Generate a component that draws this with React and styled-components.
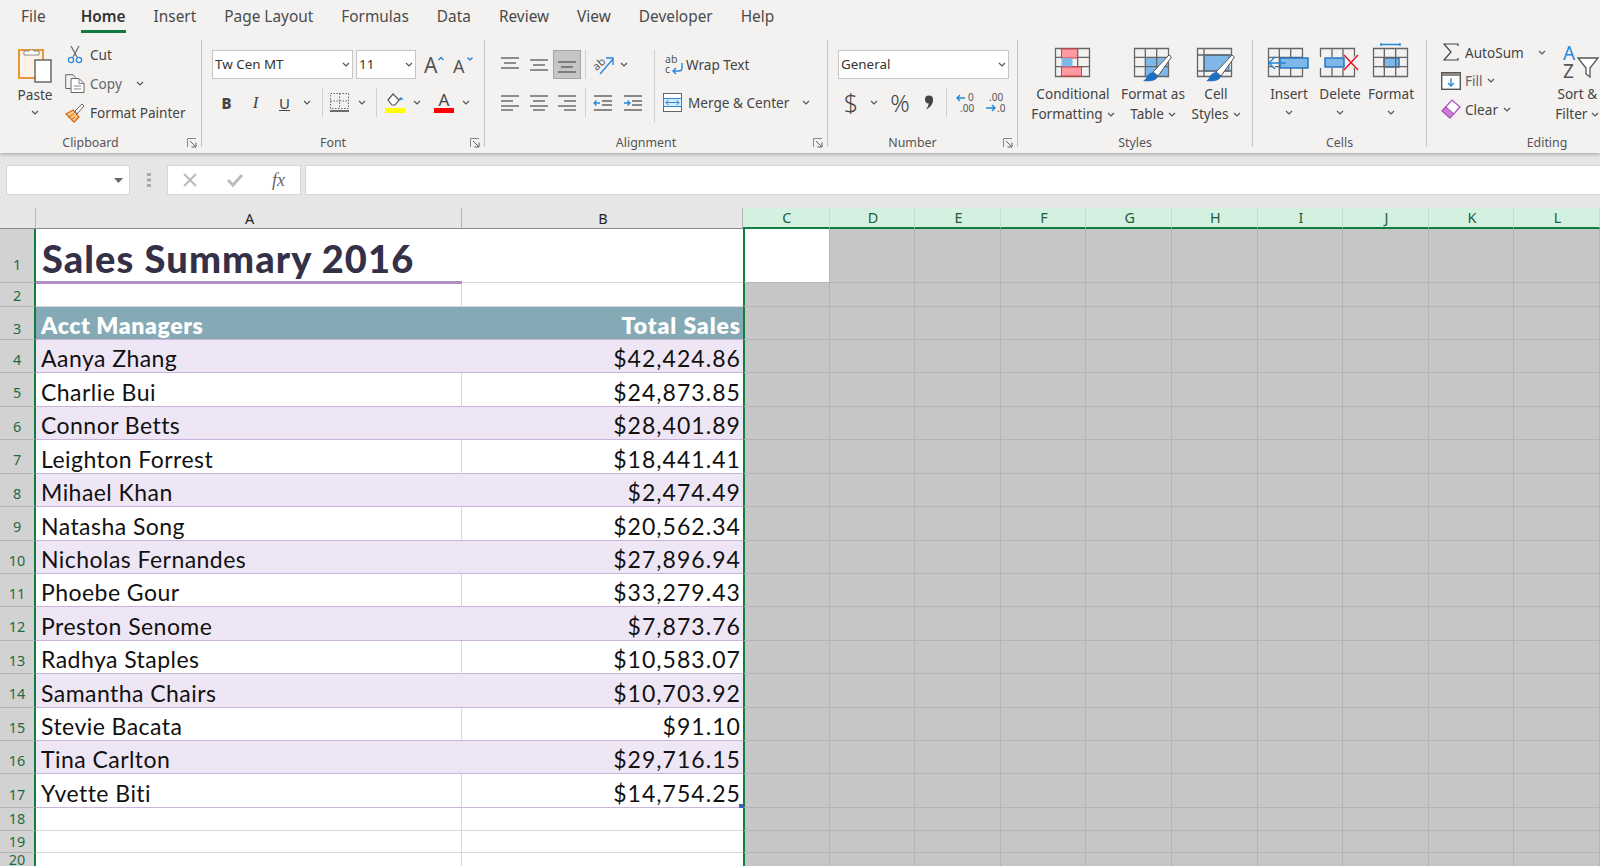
import React from 'react'
import styled, { createGlobalStyle } from 'styled-components'

const GlobalStyle = createGlobalStyle`
  html, body { margin: 0; padding: 0; height: 100%; overflow: hidden; background: #e6e6e6; }
  body { font-family: "Noto Sans", "Open Sans", sans-serif; color: #444; }
  svg { overflow: visible; flex: none; }
`

const Page = styled.div`
  width: 1600px;
  height: 866px;
  overflow: hidden;
  display: flex;
  flex-direction: column;
`

/* ---------- tabs ---------- */
const TabBar = styled.div`
  height: 40px;
  background: #f3f2f1;
  display: flex;
  padding-left: 21px;
  gap: 28px;
  box-sizing: border-box;
`
const Tab = styled.div`
  height: 33px;
  box-sizing: border-box;
  line-height: 33px;
  font-size: 15.4px;
  color: ${p => (p.$active ? '#333' : '#4a4a4a')};
  font-weight: ${p => (p.$active ? 600 : 400)};
  border-bottom: ${p => (p.$active ? '3px solid #107c41' : '0')};
  margin-left: ${p => (p.$active ? '7px' : '0')};
`

/* ---------- ribbon ---------- */
const Ribbon = styled.div`
  height: 113px;
  background: #f3f2f1;
  display: flex;
  align-items: flex-start;
  box-shadow: 0 2px 3px rgba(0, 0, 0, 0.22);
  position: relative;
  flex: none;
`
const Group = styled.div`
  width: ${p => p.$w}px;
  height: 107px;
  flex: none;
  box-sizing: border-box;
  display: flex;
  flex-direction: column;
  border-right: ${p => (p.$last ? '0' : '1.5px solid #c8c6c4')};
`
const GroupBody = styled.div`
  flex: 1;
  display: flex;
  padding: ${p => p.$pad || '10px 0 0 10px'};
  min-height: 0;
`
const Footer = styled.div`
  height: 12px;
  display: flex;
  align-items: flex-start;
  flex: none;
`
const FooterLabel = styled.div`
  flex: 1;
  text-align: center;
  font-size: 12.4px;
  line-height: 16px;
  color: #555;
`
const LauncherBox = styled.div`
  width: 20px;
  display: flex;
  justify-content: flex-end;
  padding: 3px 4px 0 0;
  box-sizing: border-box;
`
const Stack = styled.div`
  display: flex;
  flex-direction: column;
  gap: ${p => p.$gap ?? 9}px;
`
const Row = styled.div`
  display: flex;
  align-items: center;
  height: 29px;
  padding-left: ${p => p.$pl ?? 0}px;
`
const Tool = styled.div`
  width: ${p => p.$w}px;
  height: 29px;
  flex: none;
  display: flex;
  align-items: center;
  justify-content: center;
  box-sizing: border-box;
  background: ${p => (p.$on ? '#c6c6c6' : 'transparent')};
  border: ${p => (p.$on ? '1px solid #a5a5a5' : '0')};
`
const ToolSep = styled.div`
  width: 1px;
  height: ${p => p.$h ?? 29}px;
  flex: none;
  background: #d2d0ce;
  margin: 0 ${p => p.$mr ?? 7}px 0 ${p => p.$ml ?? 7}px;
`
const Select = styled.div`
  width: ${p => p.$w}px;
  height: 29px;
  box-sizing: border-box;
  flex: none;
  background: #fff;
  border: 1px solid #c8c6c4;
  display: flex;
  align-items: center;
  justify-content: space-between;
  padding: 0 2px 1px 2px;
  margin-right: ${p => p.$mr ?? 0}px;
  font-size: 13.4px;
  color: #333;
`
const Label = styled.span`
  font-size: 13.6px;
  color: ${p => p.$c || '#444'};
  white-space: nowrap;
  margin-left: ${p => p.$ml ?? 0}px;
  margin-right: ${p => p.$mr ?? 0}px;
`
const Letter = styled.span`
  font-family: ${p => (p.$i ? '"Liberation Serif", serif' : '"Noto Sans", sans-serif')};
  font-size: ${p => (p.$i ? 17 : 15)}px;
  font-weight: ${p => (p.$b ? 800 : 400)};
  font-style: ${p => (p.$i ? 'italic' : 'normal')};
  text-decoration: ${p => (p.$u ? 'underline' : 'none')};
  color: #444;
`
const BigSymbol = styled.span`
  font-size: ${p => p.$s}px;
  color: #444;
  font-weight: 300;
  line-height: 1;
`
const PasteButton = styled.div`
  width: 48px;
  margin-left: 11px;
  margin-right: 4px;
  display: flex;
  flex-direction: column;
  align-items: center;
  padding-top: 5px;
`
const PasteText = styled(Label)`
  margin-top: 2px;
`
const SmallAction = styled.div`
  display: flex;
  align-items: center;
  height: 29px;
`
const IconSlot = styled.div`
  width: 24px;
  display: flex;
  justify-content: center;
  flex: none;
`
const BigButton = styled.div`
  width: ${p => p.$w}px;
  flex: none;
  display: flex;
  flex-direction: column;
  align-items: center;
  font-size: 13.6px;
  line-height: 20px;
  color: #444;
  white-space: nowrap;
`
const SortButton = styled(BigButton)`
  margin-left: 9px;
`
const BigIcon = styled.div`
  height: 44px;
  box-sizing: border-box;
  padding-top: ${p => p.$top ?? 8}px;
  padding-left: ${p => p.$left ?? 0}px;
  display: flex;
  align-items: flex-start;
  justify-content: center;
`
const LineText = styled.div`
  display: flex;
  align-items: center;
  gap: 4px;
  height: 20px;
`
const ChevronRow = styled.div`
  height: ${p => p.$h ?? 16}px;
  display: flex;
  align-items: center;
`
const EditStack = styled.div`
  display: flex;
  flex-direction: column;
  margin-top: -2px;
`
const EditAction = styled.div`
  height: 28.5px;
  display: flex;
  align-items: center;
`
const EditSlot = styled.div`
  width: 24px;
  flex: none;
  display: flex;
  justify-content: center;
  margin-right: 2px;
`

/* ---------- formula bar ---------- */
const FormulaBar = styled.div`
  height: 55px;
  flex: none;
  background: #e6e6e6;
  box-sizing: border-box;
  padding: 12px 0 13px 6px;
  display: flex;
  align-items: stretch;
`
const NameBox = styled.div`
  width: 124px;
  box-sizing: border-box;
  background: #fff;
  border: 1px solid #d6d6d6;
  display: flex;
  align-items: center;
  justify-content: flex-end;
  padding-right: 6px;
`
const Grip = styled.div`
  width: 37px;
  display: flex;
  align-items: center;
  justify-content: center;
`
const FnBox = styled.div`
  width: 134px;
  box-sizing: border-box;
  background: #fff;
  border: 1px solid #d6d6d6;
  display: flex;
  align-items: center;
  padding-left: 14px;
  gap: 28px;
`
const Fx = styled.span`
  font-family: "Liberation Serif", serif;
  font-style: italic;
  font-size: 18px;
  color: #666;
`
const FormulaInput = styled.div`
  flex: 1;
  margin-left: 4px;
  background: #fff;
  border: 1px solid #d6d6d6;
  border-right: 0;
`

/* ---------- sheet ---------- */
const Sheet = styled.div`
  flex: 1;
  display: grid;
  grid-template-columns: 36px 426px 281px 86.6px repeat(9, 85.6px);
  grid-template-rows: 21px 54px 24px 33px repeat(14, 33.43px) 22.6px 22.6px 1fr;
  overflow: hidden;
`
const Corner = styled.div`
  background: #e6e6e6;
  border-right: 1px solid #bbb;
  border-bottom: 1px solid #8a8a8a;
  box-sizing: border-box;
`
const ColHead = styled.div`
  box-sizing: border-box;
  display: flex;
  align-items: center;
  justify-content: center;
  font-size: 14.4px;
  padding-left: 2px;
  background: ${p => (p.$sel ? '#d3f0e0' : '#e6e6e6')};
  color: ${p => (p.$sel ? '#1d5f3a' : '#222')};
  border-right: 1px solid ${p => (p.$sel ? '#c0e0cf' : '#b4b4b4')};
  border-bottom: ${p => (p.$sel ? '2px solid #107c41' : '1px solid #8a8a8a')};
`
const RowHead = styled.div`
  box-sizing: border-box;
  background: #d2d2d2;
  color: #1d6b3e;
  font-size: 14.4px;
  line-height: 1;
  display: flex;
  align-items: flex-end;
  justify-content: center;
  padding-bottom: ${p => p.$pb ?? 3}px;
  border-right: 2px solid #107c41;
  border-bottom: 1px solid #b4b4b4;
`
const Cell = styled.div`
  box-sizing: border-box;
  font-family: Lato, "Open Sans", sans-serif;
  font-size: 23px;
  line-height: 1;
  white-space: nowrap;
  display: flex;
  align-items: flex-end;
  padding: 0 2px ${p => (p.$head ? 2 : 2)}px 5px;
  justify-content: ${p => (p.$right ? 'flex-end' : 'flex-start')};
  color: ${p => (p.$head ? '#fff' : '#111')};
  font-weight: ${p => (p.$head ? 800 : 400)};
  letter-spacing: ${p => (p.$head ? (p.$right ? '0.9px' : '0.6px') : p.$right ? '1.05px' : '0.45px')};
  background: ${p => (p.$head ? '#85aab5' : p.$band ? '#efe6f5' : '#fff')};
  border-bottom: 1px solid #c9b5dc;
  border-right: ${p => (p.$head || p.$band || p.$right ? '0' : '1px solid #d8d8d8')};
  position: relative;
`
const TitleCell = styled.div`
  box-sizing: border-box;
  font-family: Lato, "Open Sans", sans-serif;
  font-size: 38px;
  font-weight: 900;
  letter-spacing: 1.1px;
  line-height: 1;
  color: #343048;
  background: #fff;
  display: flex;
  align-items: flex-end;
  padding: 0 0 4px 6px;
  margin-bottom: -1px;
  position: relative;
  white-space: nowrap;
  border-bottom: 3px solid #b08fc7;
`
const PlainCell = styled.div`
  box-sizing: border-box;
  background: #fff;
  border-bottom: 1px solid #d8d8d8;
  border-right: ${p => (p.$noRight ? '0' : '1px solid #d8d8d8')};
`
const GreyCell = styled.div`
  box-sizing: border-box;
  background: ${p => (p.$white ? '#fff' : '#c6c6c6')};
  border-right: 1px solid #b4b4b4;
  border-bottom: 1px solid #b4b4b4;
  border-left: ${p => (p.$first ? '2px solid #107c41' : '0')};
`
const FillHandle = styled.i`
  position: absolute;
  right: 0;
  bottom: -1px;
  width: 4px;
  height: 4px;
  background: #3c5fc0;
`

/* ---------- icons ---------- */
const Chevron = ({ ml = 0, mr = 0 }) => (
  <svg width="8" height="5" viewBox="0 0 8 5" style={{ marginLeft: ml, marginRight: mr }}>
    <path d="M1 1l3 3 3-3" fill="none" stroke="#555" strokeWidth="1.2" />
  </svg>
)
const Launcher = () => (
  <svg width="10" height="10" viewBox="0 0 10 10">
    <path d="M.5 9V.5H9" fill="none" stroke="#8a8886" />
    <path d="M3 3l5.5 5.5M9 4.5V9H4.5" fill="none" stroke="#605e5c" />
  </svg>
)
const PasteIcon = () => (
  <svg width="34" height="38" viewBox="0 0 34 38">
    <rect x="1" y="5" width="24" height="28" fill="#fbf1e4" stroke="#e8973a" strokeWidth="2" />
    <path d="M6 10V6h5a3 3 0 0 1 5 0h5v4z" fill="#fff" stroke="#8a8886" />
    <rect x="17" y="15" width="16" height="22" fill="#fff" stroke="#605e5c" strokeWidth="1.4" />
  </svg>
)
const CutIcon = () => (
  <svg width="16" height="19" viewBox="0 0 16 19">
    <path d="M4 1l6 11M12 1L6 12" fill="none" stroke="#666" strokeWidth="1.2" />
    <circle cx="4" cy="15" r="2.6" fill="none" stroke="#2b88d8" strokeWidth="1.3" />
    <circle cx="12" cy="15" r="2.6" fill="none" stroke="#2b88d8" strokeWidth="1.3" />
  </svg>
)
const CopyIcon = () => (
  <svg width="20" height="19" viewBox="0 0 20 19">
    <path d="M6 14.500H.7V.7h7.500l2.500 3" fill="none" stroke="#666" />
    <path d="M6 4.500h8l5 5v9H6z" fill="#fff" stroke="#666" />
    <path d="M14 4.500v5h5M9 12h7M9 15h7" fill="none" stroke="#888" />
  </svg>
)
const PainterIcon = () => (
  <svg width="20" height="20" viewBox="0 0 20 20">
    <path d="M1 11l7-4 6 7-5 5z" fill="#f6c48d" stroke="#d8690f" strokeWidth="1.3" />
    <path d="M3.500 14l5-3M6 17l4-3" stroke="#d8690f" />
    <path d="M10 8l7-7 2 2-7 8z" fill="#fff" stroke="#666" />
  </svg>
)
const FontSizeIcon = ({ up }) => (
  <svg width="21" height="20" viewBox="0 0 21 20">
    <text x="0" y="18" fontFamily="Noto Sans" fontSize={up ? 21 : 18} fill="#555">A</text>
    <path d={up ? 'M14.500 5l2.500-2.500L19.500 5' : 'M14.500 2.500L17 5l2.500-2.500'} fill="none" stroke="#2b88d8" strokeWidth="1.4" />
  </svg>
)
const BorderIcon = () => (
  <svg width="19" height="19" viewBox="0 0 19 19">
    <path d="M.5.5h18v15H.5zM9.500.5v15M.5 8h18" fill="none" stroke="#666" strokeDasharray="1.5 1.5" />
    <path d="M0 18h19" stroke="#333" strokeWidth="1.4" />
  </svg>
)
const FillIcon = () => (
  <svg width="20" height="21" viewBox="0 0 20 21">
    <path d="M3 8l5-6 6 6-4 5H7z" fill="#fff" stroke="#555" strokeWidth="1.2" />
    <path d="M14 7c2-3 4-1 4 1l-2-1-1 2z" fill="#1f6fc0" />
    <rect x="0" y="16" width="20" height="5" fill="#ffff00" />
  </svg>
)
const ColorIcon = () => (
  <svg width="20" height="21" viewBox="0 0 20 21">
    <text x="10" y="14" textAnchor="middle" fontFamily="Noto Sans" fontSize="17" fill="#444">A</text>
    <rect x="0" y="16" width="20" height="5" fill="#f00" />
  </svg>
)
const Lines = ({ rows, w = 18, h = 16 }) => (
  <svg width={w} height={h} viewBox={`0 0 ${w} ${h}`}>
    {rows.map(([a, b, y], i) => (
      <path key={i} d={`M${a} ${y}H${b}`} stroke="#555" strokeWidth="1.3" />
    ))}
  </svg>
)
const IndentIcon = ({ out }) => (
  <svg width="18" height="16" viewBox="0 0 18 16">
    <path d="M0 1h18M8 6h10M8 10h10M0 15h18" stroke="#666" strokeWidth="1.3" />
    <path d={out ? 'M6 8H0m2.500-2.500L0 8l2.500 2.500' : 'M0 8h6M3.500 5.500L6 8l-2.500 2.500'} fill="none" stroke="#1f8ad8" strokeWidth="1.3" />
  </svg>
)
const OrientIcon = () => (
  <svg width="22" height="20" viewBox="0 0 22 20">
    <text x="0" y="13" fontFamily="Noto Sans" fontSize="11" fill="#555" transform="rotate(-42 6 10)">ab</text>
    <path d="M7 19L20 4M13 3h7v7" fill="none" stroke="#2b88d8" strokeWidth="1.4" />
  </svg>
)
const WrapIcon = () => (
  <svg width="19" height="20" viewBox="0 0 19 20">
    <text x="0" y="8" fontFamily="Noto Sans" fontSize="10.5" fill="#555">ab</text>
    <text x="0" y="18" fontFamily="Noto Sans" fontSize="10.5" fill="#555">c</text>
    <path d="M17 8v5a3 3 0 0 1-3 3H8m3-3l-3 3 3 3" fill="none" stroke="#2b88d8" strokeWidth="1.4" />
  </svg>
)
const MergeIcon = () => (
  <svg width="19" height="19" viewBox="0 0 19 19">
    <rect x=".5" y=".5" width="18" height="18" fill="#fff" stroke="#666" />
    <rect x=".5" y="5.500" width="18" height="8" fill="#d6ecfa" stroke="#2b88d8" />
    <path d="M3 9.500h13M5.500 7L3 9.500 5.500 12M13.500 7L16 9.500 13.500 12" fill="none" stroke="#2b88d8" />
  </svg>
)
const CommaIcon = () => (
  <svg width="10" height="15" viewBox="0 0 10 15">
    <circle cx="5" cy="4.500" r="4" fill="#444" />
    <path d="M9 4.500c0 5-3 8-7 10 2-3 3-5 3-8z" fill="#444" />
  </svg>
)
const DecimalIcon = ({ more }) => (
  <svg width="22" height="22" viewBox="0 0 22 22">
    {more ? (
      <>
        <path d="M10 6H2m3-3L2 6l3 3" fill="none" stroke="#1f8ad8" strokeWidth="1.4" />
        <text x="13" y="9" fontFamily="Noto Sans" fontSize="10" fill="#555">0</text>
        <text x="5" y="20" fontFamily="Noto Sans" fontSize="10" fill="#555">.00</text>
      </>
    ) : (
      <>
        <text x="5" y="9" fontFamily="Noto Sans" fontSize="10" fill="#555">.00</text>
        <path d="M2 16h9m-3-3l3 3-3 3" fill="none" stroke="#1f8ad8" strokeWidth="1.4" />
        <text x="13" y="20" fontFamily="Noto Sans" fontSize="10" fill="#555">.0</text>
      </>
    )}
  </svg>
)
const GridLines = ({ x = 0, y = 0, w = 34, h = 28 }) => (
  <path
    d={`M${x + 0.5} ${y + 0.5}h${w}v${h}h-${w}zM${x + w / 3} ${y}v${h}M${x + (2 * w) / 3} ${y}v${h}M${x} ${y + h / 3}h${w}M${x} ${y + (2 * h) / 3}h${w}`}
    fill="none"
    stroke="#666"
    strokeWidth="1.3"
  />
)
const Brush = () => (
  <g>
    <path d="M19 24L35 7l2.500 2L24 28z" fill="#fff" stroke="#555" />
    <path d="M9 33c4-1 3-8 10-9l5 4c-1 5-9 6-15 5z" fill="#1f6fc0" />
  </g>
)
const CondIcon = () => (
  <svg width="36" height="30" viewBox="0 0 36 30">
    <GridLines />
    <rect x="6.500" y="1" width="16" height="9" fill="#ff9aa2" stroke="#d83b3b" />
    <rect x="6.500" y="10" width="11" height="9" fill="#7fb8e8" />
    <rect x="6.500" y="19" width="20" height="9" fill="#ff9aa2" stroke="#d83b3b" />
  </svg>
)
const TableIcon = () => (
  <svg width="38" height="34" viewBox="0 0 38 34">
    <rect x="12" y="10" width="23" height="19" fill="#7fb8e8" />
    <GridLines />
    <Brush />
  </svg>
)
const StylesIcon = () => (
  <svg width="38" height="34" viewBox="0 0 38 34">
    <rect x="7" y="7" width="25" height="16" fill="#7fb8e8" stroke="#1f6fc0" />
    <path d="M.5.5h34v28H.5zM0 7h35M7 0v29M0 23h35" fill="none" stroke="#666" strokeWidth="1.3" />
    <Brush />
  </svg>
)
const InsertIcon = () => (
  <svg width="42" height="30" viewBox="0 0 42 30">
    <GridLines />
    <rect x="12" y="10" width="28" height="10" fill="#7fb8e8" stroke="#1f6fc0" strokeWidth="1.4" />
    <path d="M18 15H1m6-6l-6 6 6 6" fill="#f3f2f1" stroke="#1f8ad8" strokeWidth="1.4" />
  </svg>
)
const DeleteIcon = () => (
  <svg width="40" height="30" viewBox="0 0 40 30">
    <path d="M.5 9V.5h34v8M.5 20v8.500h34V20M12 0v9M23 0v9M12 20v9M23 20v9" fill="none" stroke="#666" strokeWidth="1.3" />
    <rect x="5" y="10" width="19" height="9" fill="#7fb8e8" stroke="#1f6fc0" strokeWidth="1.4" />
    <path d="M24 7l14 15M38 7L24 22" fill="none" stroke="#e81123" strokeWidth="1.4" />
  </svg>
)
const FormatIcon = () => (
  <svg width="36" height="34" viewBox="0 0 36 34">
    <path d="M8 1.500h19M8 0v3M27 0v3" fill="none" stroke="#1f8ad8" strokeWidth="1.4" />
    <g transform="translate(0 5)">
      <rect x="11" y="10" width="15" height="9" fill="#7fb8e8" stroke="#1f6fc0" strokeWidth="1.4" />
      <GridLines />
    </g>
  </svg>
)
const SumIcon = () => (
  <svg width="16" height="18" viewBox="0 0 16 18">
    <path d="M15 3V1H1l7 8-7 8h14v-2" fill="none" stroke="#444" strokeWidth="1.2" />
  </svg>
)
const FillDownIcon = () => (
  <svg width="20" height="18" viewBox="0 0 20 18">
    <rect x=".7" y=".7" width="18.600" height="16.600" fill="#fff" stroke="#555" strokeWidth="1.4" />
    <rect x="1" y="1" width="18" height="3" fill="#8a8886" />
    <path d="M10 6v8M7 11l3 3 3-3" fill="none" stroke="#1f8ad8" strokeWidth="1.3" />
  </svg>
)
const ClearIcon = () => (
  <svg width="20" height="20" viewBox="0 0 20 20">
    <path d="M1 12L11 1l8 7-10 11z" fill="#fff" stroke="#b146c2" strokeWidth="1.2" />
    <path d="M1 12l4-4 8 7-4 4z" fill="#c87fd6" stroke="#a03db3" />
  </svg>
)
const SortIcon = () => (
  <svg width="38" height="34" viewBox="0 0 38 34">
    <text x="0" y="15" fontFamily="Noto Sans" fontSize="19" fill="#1f8ad8">A</text>
    <text x="0" y="33" fontFamily="Noto Sans" fontSize="19" fill="#555">Z</text>
    <path d="M15 13h20l-8 10v9l-4-3v-6z" fill="#fff" stroke="#555" strokeWidth="1.3" />
  </svg>
)

const top = [[0, 18, 1], [3, 15, 6], [0, 18, 11]]
const mid = [[0, 18, 3], [3, 15, 8], [0, 18, 13]]
const bot = [[0, 18, 5], [3, 15, 10], [0, 18, 15]]
const left = [[0, 18, 1], [0, 12, 6], [0, 18, 11], [0, 12, 15]]
const center = [[0, 18, 1], [3, 15, 6], [0, 18, 11], [3, 15, 15]]
const right = [[0, 18, 1], [6, 18, 6], [0, 18, 11], [6, 18, 15]]

/* ---------- data ---------- */
const tabs = ['File', 'Home', 'Insert', 'Page Layout', 'Formulas', 'Data', 'Review', 'View', 'Developer', 'Help']
const columns = ['C', 'D', 'E', 'F', 'G', 'H', 'I', 'J', 'K', 'L']
const people = [
  ['Aanya Zhang', '$42,424.86'],
  ['Charlie Bui', '$24,873.85'],
  ['Connor Betts', '$28,401.89'],
  ['Leighton Forrest', '$18,441.41'],
  ['Mihael Khan', '$2,474.49'],
  ['Natasha Song', '$20,562.34'],
  ['Nicholas Fernandes', '$27,896.94'],
  ['Phoebe Gour', '$33,279.43'],
  ['Preston Senome', '$7,873.76'],
  ['Radhya Staples', '$10,583.07'],
  ['Samantha Chairs', '$10,703.92'],
  ['Stevie Bacata', '$91.10'],
  ['Tina Carlton', '$29,716.15'],
  ['Yvette Biti', '$14,754.25'],
]

const GreyRun = ({ row, firstWhite }) =>
  columns.map((c, i) => (
    <GreyCell key={row + c} $first={i === 0} $white={firstWhite && i === 0} />
  ))

const GroupFoot = ({ label, launcher }) => (
  <Footer>
    <FooterLabel>{label}</FooterLabel>
    {launcher && (
      <LauncherBox>
        <Launcher />
      </LauncherBox>
    )}
  </Footer>
)

const Big = ({ w, icon, lines }) => (
  <BigButton $w={w}>
    <BigIcon>{icon}</BigIcon>
    {lines.map((l, i) => (
      <LineText key={l}>
        {l}
        {i === lines.length - 1 && <Chevron />}
      </LineText>
    ))}
  </BigButton>
)

const CellsBtn = ({ w, icon, label, iconTop }) => (
  <BigButton $w={w}>
    <BigIcon $top={iconTop}>{icon}</BigIcon>
    <LineText>{label}</LineText>
    <ChevronRow>
      <Chevron />
    </ChevronRow>
  </BigButton>
)

export default function App() {
  return (
    <Page>
      <GlobalStyle />
      <TabBar>
        {tabs.map(t => (
          <Tab key={t} $active={t === 'Home'}>
            {t}
          </Tab>
        ))}
      </TabBar>

      <Ribbon>
        <Group $w={202}>
          <GroupBody $pad="0">
            <PasteButton>
              <PasteIcon />
              <PasteText>Paste</PasteText>
              <ChevronRow>
                <Chevron />
              </ChevronRow>
            </PasteButton>
            <Stack $gap={0}>
              <SmallAction>
                <IconSlot>
                  <CutIcon />
                </IconSlot>
                <Label $ml={3}>Cut</Label>
              </SmallAction>
              <SmallAction>
                <IconSlot>
                  <CopyIcon />
                </IconSlot>
                <Label $ml={3} $mr={14} $c="#666">Copy</Label>
                <Chevron />
              </SmallAction>
              <SmallAction>
                <IconSlot>
                  <PainterIcon />
                </IconSlot>
                <Label $ml={3}>Format Painter</Label>
              </SmallAction>
            </Stack>
          </GroupBody>
          <GroupFoot label="Clipboard" launcher />
        </Group>

        <Group $w={283}>
          <GroupBody>
            <Stack>
              <Row>
                <Select $w={141} $mr={3}>
                  Tw Cen MT
                  <Chevron />
                </Select>
                <Select $w={60} $mr={8}>
                  11
                  <Chevron />
                </Select>
                <FontSizeIcon up />
                <Tool $w={8} />
                <FontSizeIcon />
              </Row>
              <Row>
                <Tool $w={29}><Letter $b>B</Letter></Tool>
                <Tool $w={29}><Letter $i>I</Letter></Tool>
                <Tool $w={29}><Letter $u>U</Letter></Tool>
                <Chevron ml={4} />
                <ToolSep $ml={11} $mr={7} />
                <BorderIcon />
                <Chevron ml={9} />
                <ToolSep $ml={10} $mr={8} />
                <FillIcon />
                <Chevron ml={8} />
                <Tool $w={13} />
                <ColorIcon />
                <Chevron ml={8} />
              </Row>
            </Stack>
          </GroupBody>
          <GroupFoot label="Font" launcher />
        </Group>

        <Group $w={343}>
          <GroupBody $pad="10px 0 0 10px">
            <Stack>
              <Row>
                <Tool $w={29}><Lines rows={top} /></Tool>
                <Tool $w={29}><Lines rows={mid} /></Tool>
                <Tool $w={28} $on><Lines rows={bot} /></Tool>
                <ToolSep $ml={4} $mr={7} />
                <OrientIcon />
                <Chevron ml={5} />
              </Row>
              <Row>
                <Tool $w={29}><Lines rows={left} /></Tool>
                <Tool $w={29}><Lines rows={center} /></Tool>
                <Tool $w={28}><Lines rows={right} /></Tool>
                <ToolSep $ml={4} $mr={8} />
                <IndentIcon out />
                <Tool $w={12} />
                <IndentIcon />
              </Row>
            </Stack>
            <ToolSep $h={73} $ml={12} $mr={8} />
            <Stack>
              <Row $pl={2}>
                <WrapIcon />
                <Label $ml={2}>Wrap Text</Label>
              </Row>
              <Row>
                <MergeIcon />
                <Label $ml={6} $mr={13}>Merge &amp; Center</Label>
                <Chevron />
              </Row>
            </Stack>
          </GroupBody>
          <GroupFoot label="Alignment" launcher />
        </Group>

        <Group $w={190}>
          <GroupBody>
            <Stack>
              <Row>
                <Select $w={171}>
                  General
                  <Chevron />
                </Select>
              </Row>
              <Row>
                <Tool $w={26}><BigSymbol $s={25}>$</BigSymbol></Tool>
                <Chevron ml={6} mr={6} />
                <Tool $w={32}><BigSymbol $s={24}>%</BigSymbol></Tool>
                <Tool $w={26}><CommaIcon /></Tool>
                <ToolSep $ml={4} $mr={8} />
                <DecimalIcon more />
                <Tool $w={7} />
                <DecimalIcon />
              </Row>
            </Stack>
          </GroupBody>
          <GroupFoot label="Number" launcher />
        </Group>

        <Group $w={235}>
          <GroupBody $pad="0 0 0 5px">
            <Big w={100} icon={<CondIcon />} lines={['Conditional', 'Formatting']} />
            <Big w={60} icon={<TableIcon />} lines={['Format as', 'Table']} />
            <Big w={66} icon={<StylesIcon />} lines={['Cell', 'Styles']} />
          </GroupBody>
          <GroupFoot label="Styles" />
        </Group>

        <Group $w={174}>
          <GroupBody $pad="0 0 0 11px">
            <CellsBtn w={50} icon={<InsertIcon />} label="Insert" />
            <CellsBtn w={52} icon={<DeleteIcon />} label="Delete" />
            <CellsBtn w={50} icon={<FormatIcon />} label="Format" iconTop={3} />
          </GroupBody>
          <GroupFoot label="Cells" />
        </Group>

        <Group $w={240} $last>
          <GroupBody $pad="0 0 0 12px">
            <EditStack>
              <EditAction>
                <EditSlot><SumIcon /></EditSlot>
                <Label $mr={14}>AutoSum</Label>
                <Chevron />
              </EditAction>
              <EditAction>
                <EditSlot><FillDownIcon /></EditSlot>
                <Label $mr={4} $c="#666">Fill</Label>
                <Chevron />
              </EditAction>
              <EditAction>
                <EditSlot><ClearIcon /></EditSlot>
                <Label $mr={5}>Clear</Label>
                <Chevron />
              </EditAction>
            </EditStack>
            <SortButton $w={45}>
              <BigIcon $top={5} $left={10}><SortIcon /></BigIcon>
              <LineText>Sort &amp;</LineText>
              <LineText>Filter<Chevron /></LineText>
            </SortButton>
          </GroupBody>
          <GroupFoot label="Editing" />
        </Group>
      </Ribbon>

      <FormulaBar>
        <NameBox>
          <svg width="9" height="5" viewBox="0 0 9 5">
            <path d="M0 0h9L4.500 5z" fill="#666" />
          </svg>
        </NameBox>
        <Grip>
          <svg width="4" height="14" viewBox="0 0 4 14">
            <path d="M0 0h4v3H0zM0 5.500h4v3H0zM0 11h4v3H0z" fill="#aaa" />
          </svg>
        </Grip>
        <FnBox>
          <svg width="16" height="14" viewBox="0 0 16 14">
            <path d="M2 1l12 12M14 1L2 13" stroke="#bbb" strokeWidth="2" />
          </svg>
          <svg width="18" height="14" viewBox="0 0 18 14">
            <path d="M2 7l5 5L16 2" fill="none" stroke="#bbb" strokeWidth="3" />
          </svg>
          <Fx>fx</Fx>
        </FnBox>
        <FormulaInput />
      </FormulaBar>

      <Sheet>
        <Corner />
        <ColHead>A</ColHead>
        <ColHead>B</ColHead>
        {columns.map(c => (
          <ColHead key={c} $sel>{c}</ColHead>
        ))}

        <RowHead $pb={10}>1</RowHead>
        <TitleCell>Sales Summary 2016</TitleCell>
        <PlainCell $noRight />
        <GreyRun row="r1" firstWhite />

        <RowHead>2</RowHead>
        <PlainCell />
        <PlainCell $noRight />
        <GreyRun row="r2" />

        <RowHead>3</RowHead>
        <Cell $head>Acct Managers</Cell>
        <Cell $head $right>Total Sales</Cell>
        <GreyRun row="r3" />

        {people.map(([name, total], i) => (
          <React.Fragment key={name}>
            <RowHead $pb={5}>{i + 4}</RowHead>
            <Cell $band={i % 2 === 0}>{name}</Cell>
            <Cell $band={i % 2 === 0} $right>
              {total}
              {i === people.length - 1 && <FillHandle />}
            </Cell>
            <GreyRun row={name} />
          </React.Fragment>
        ))}

        {[18, 19, 20].map(n => (
          <React.Fragment key={n}>
            <RowHead>{n}</RowHead>
            <PlainCell />
            <PlainCell $noRight />
            <GreyRun row={'r' + n} />
          </React.Fragment>
        ))}
      </Sheet>
    </Page>
  )
}
